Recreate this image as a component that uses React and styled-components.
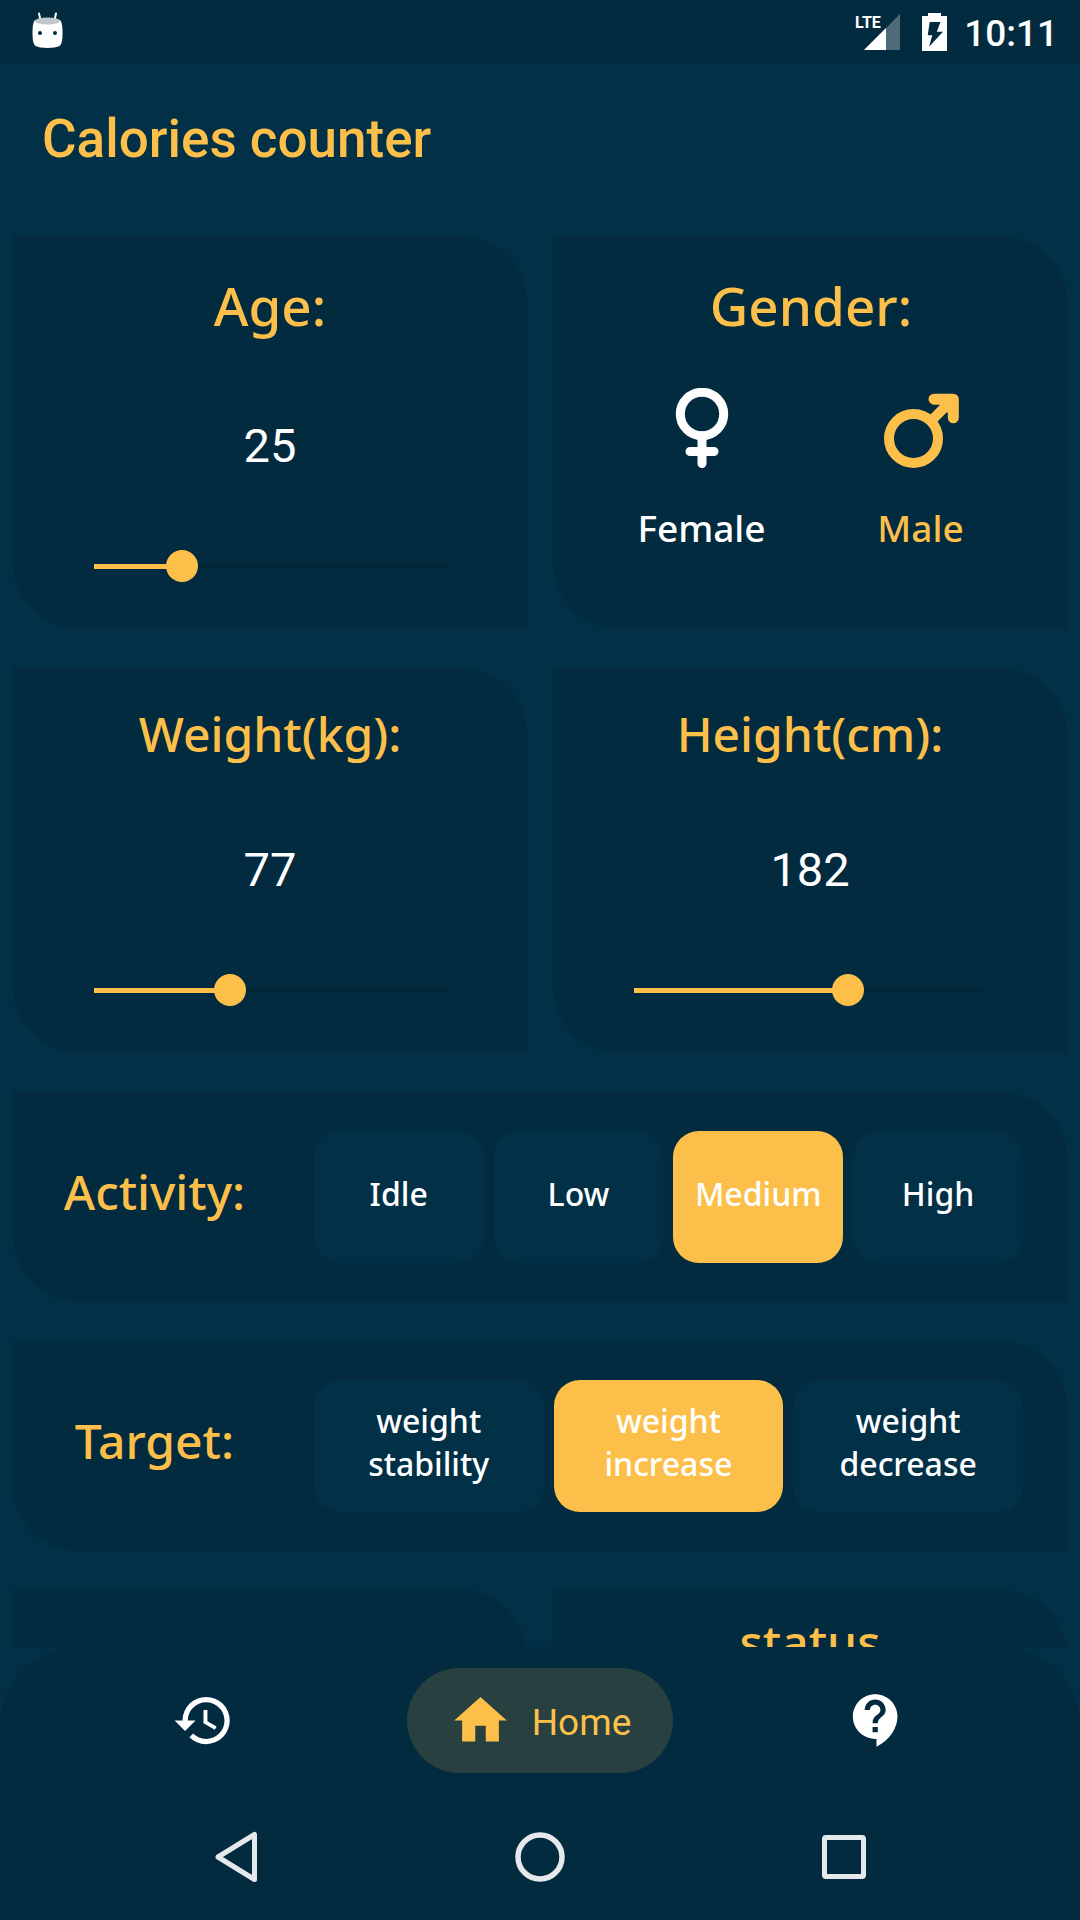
import React, { useState } from "react";
import styled, { createGlobalStyle, ThemeProvider } from "styled-components";
import { MdHistory, MdHome, MdContactSupport } from "react-icons/md";

const theme = {
  page: "#023047",
  panel: "#022b3f",
  track: "#022738",
  accent: "#fcbf49",
  pill: "#284140",
  text: "#ffffff",
  system: "#e6e9ec",
  ui: 'Roboto, "Liberation Sans", sans-serif',
  display: '"Noto Sans", "Open Sans", sans-serif',
};

const GlobalStyle = createGlobalStyle`
  *, *::before, *::after { box-sizing: border-box; }
  body {
    margin: 0;
    background: ${theme.page};
    color: ${theme.text};
    font-family: ${theme.ui};
  }
  button {
    margin: 0;
    padding: 0;
    border: 0;
    background: none;
    color: inherit;
    font: inherit;
    cursor: pointer;
  }
`;

const Screen = styled.div`
  display: flex;
  flex-direction: column;
  height: 100vh;
  overflow: hidden;
`;

const StatusBar = styled.div`
  display: flex;
  flex: none;
  align-items: center;
  justify-content: space-between;
  height: 63px;
  padding: 0 22px 0 30px;
  background: ${(p) => p.theme.panel};
`;

const StatusIcons = styled.div`
  display: flex;
  align-items: center;
  gap: 17px;
`;

const Clock = styled.time`
  padding-top: 4px;
  font-size: 37px;
  font-weight: 500;
  line-height: 43px;
`;

const Header = styled.header`
  flex: none;
  padding: 45px 42px 66px;
`;

const AppTitle = styled.h1`
  margin: 0;
  color: ${(p) => p.theme.accent};
  font-size: 53px;
  font-weight: 500;
  line-height: 62px;
`;

const Content = styled.main`
  display: flex;
  flex: 1;
  flex-direction: column;
  gap: 39px;
  min-height: 0;
  padding: 0 13px;
  overflow-y: auto;
  scrollbar-width: none;
`;

const CardRow = styled.div`
  display: grid;
  flex: none;
  grid-template-columns: 1fr 1fr;
  gap: 26px;
`;

const Card = styled.section`
  background: ${(p) => p.theme.panel};
  border-radius: 0 66px 0 66px;
`;

const SliderCard = styled(Card)`
  display: flex;
  flex-direction: column;
  align-items: center;
  gap: 76px;
  padding: 34px 65px 47px;
`;

const GenderCard = styled(Card)`
  display: flex;
  flex-direction: column;
  align-items: center;
  gap: 46px;
  padding: 34px 37px 47px 39px;
`;

const ResultCard = styled(Card)`
  display: flex;
  justify-content: center;
  min-height: 210px;
  padding: 20px 38px;
`;

const CardTitle = styled.h2`
  margin: 0;
  color: ${(p) => p.theme.accent};
  font-family: ${(p) => p.theme.display};
  font-size: ${(p) => (p.$large ? 53 : 48)}px;
  font-weight: 500;
  line-height: ${(p) => (p.$large ? 72 : 64)}px;
  text-align: center;
`;

const Value = styled.output`
  font-size: 47px;
  line-height: 56px;
`;

const Slider = styled.input`
  appearance: none;
  width: 100%;
  height: 32px;
  margin: 0;
  background: none;
  cursor: pointer;

  &::-webkit-slider-runnable-track {
    height: 5px;
    background: linear-gradient(
      to right,
      ${(p) => p.theme.accent} var(--fill),
      ${(p) => p.theme.track} var(--fill)
    ) center / calc(100% - 32px) 5px no-repeat;
  }

  &::-webkit-slider-thumb {
    appearance: none;
    width: 32px;
    height: 32px;
    margin-top: -14px;
    border-radius: 50%;
    background: ${(p) => p.theme.accent};
  }
`;

const GenderChoices = styled.div`
  display: grid;
  grid-template-columns: 1fr 1fr;
  width: 100%;
`;

const GenderButton = styled.button`
  && {
    display: flex;
    flex-direction: column;
    align-items: center;
    gap: 36px;
    color: ${(p) => (p["aria-pressed"] ? p.theme.accent : p.theme.text)};
    font-family: ${(p) => p.theme.display};
    font-size: 37px;
    font-weight: 500;
    line-height: 48px;
  }
`;

const OptionCard = styled(Card)`
  display: flex;
  flex: none;
  align-items: center;
  gap: 18px;
  padding: 39px 44px 39px 0;
`;

const OptionTitle = styled(CardTitle)`
  flex: 0 0 28%;
  padding-bottom: 10px;
`;

const Options = styled.div`
  display: flex;
  flex: 1;
  gap: 10px;
`;

const OptionButton = styled.button`
  && {
    flex: 1 1 0;
    min-width: 0;
    height: 132px;
    padding: 0 16px 8px;
    border-radius: 26px;
    background: ${(p) => (p["aria-pressed"] ? p.theme.accent : p.theme.page)};
    font-family: ${(p) => p.theme.display};
    font-size: 32px;
    font-weight: 500;
    line-height: 43px;
  }
`;

const TabBar = styled.nav`
  display: flex;
  flex: none;
  align-items: center;
  justify-content: space-evenly;
  padding: 21px 0;
  background: ${(p) => p.theme.panel};
  border-radius: 78px 78px 0 0;
`;

const Tab = styled.a`
  display: flex;
  align-items: center;
  gap: 20px;
  height: 105px;
  padding: 0 42px;
  border-radius: 53px;
  background: ${(p) => (p.$active ? p.theme.pill : "transparent")};
  color: ${(p) => (p.$active ? p.theme.accent : p.theme.text)};
  font-size: 37px;
  line-height: 43px;
  text-decoration: none;
`;

const TabLabel = styled.span`
  padding-top: 4px;
`;

const SystemBar = styled.div`
  display: flex;
  flex: none;
  height: 126px;
  padding: 0 84px;
  background: ${(p) => p.theme.panel};
`;

const SystemButton = styled.button`
  && {
    display: flex;
    flex: 1;
    align-items: center;
    justify-content: center;
    color: ${(p) => p.theme.system};
  }
`;

const RobotIcon = () => (
  <svg width="35" height="40" viewBox="0 0 35 40" aria-hidden="true">
    <path d="M9 1.500l1.500 6.500M26 1.500l-1.500 6.500" stroke="#fff" strokeWidth="2" strokeLinecap="round" />
    <path d="M5 8C3 10 2.500 15 2.500 21c0 6 .500 11 3 13C10 36.500 25 36.500 29.500 34c2.500-2 3-7 3-13 0-6-.500-11-2.500-13z" fill="#fff" />
    <ellipse cx="17.500" cy="9" rx="12.500" ry="3.500" fill="#c0c8cd" />
    <circle cx="10" cy="21" r="2" fill={theme.panel} />
    <circle cx="25" cy="21" r="2" fill={theme.panel} />
  </svg>
);

const SignalIcon = () => (
  <svg width="50" height="38" viewBox="0 0 50 38" role="img" aria-label="LTE signal">
    <path d="M45 1v36H9z" fill="#4f6b79" />
    <path d="M31 15v22H9z" fill="#fff" />
    <text x="0" y="15" fill="#fff" fontFamily="'Liberation Sans Narrow', Roboto, sans-serif" fontSize="16" fontWeight="700">
      LTE
    </text>
  </svg>
);

const BatteryIcon = () => (
  <svg width="25" height="38" viewBox="0 0 25 38" role="img" aria-label="Battery charging">
    <path d="M6 0h13v3h6v35H0V3h6z" fill="#fff" />
    <path d="M7.700 9h10.800l-3.700 9.700H21L7 33.700l3.300-11.400H5.700z" fill={theme.panel} />
  </svg>
);

const FemaleIcon = () => (
  <svg width="80" height="80" viewBox="0 0 80 80" fill="none" stroke="currentColor" strokeWidth="9" strokeLinecap="round" aria-hidden="true">
    <circle cx="40" cy="26" r="21.700" />
    <path d="M40 48v27.500M28 63.500h24" />
  </svg>
);

const MaleIcon = () => (
  <svg width="80" height="80" viewBox="0 0 80 80" fill="none" stroke="currentColor" strokeLinecap="round" strokeLinejoin="round" aria-hidden="true">
    <circle cx="32.500" cy="50.500" r="24.500" strokeWidth="10" />
    <path d="M51 32l18-18" strokeWidth="10" />
    <path d="M53 11.200h19.300v18.600" strokeWidth="11" />
    <path d="M60 14h10v10z" fill="currentColor" strokeWidth="6" />
  </svg>
);

const BackIcon = () => (
  <svg width="54" height="54" viewBox="0 0 54 54" fill="none" stroke="currentColor" strokeWidth="5" strokeLinejoin="round" aria-hidden="true">
    <path d="M45.500 4.500v45L9 27z" />
  </svg>
);

const CircleIcon = () => (
  <svg width="54" height="54" viewBox="0 0 54 54" fill="none" stroke="currentColor" strokeWidth="5.500" aria-hidden="true">
    <circle cx="27" cy="27" r="22" />
  </svg>
);

const SquareIcon = () => (
  <svg width="54" height="54" viewBox="0 0 54 54" fill="none" stroke="currentColor" strokeWidth="5" aria-hidden="true">
    <rect x="7.500" y="7.500" width="39" height="39" rx="1.500" />
  </svg>
);

function RangeCard({ id, title, large, max, initial }) {
  const [value, setValue] = useState(initial);
  return (
    <SliderCard>
      <CardTitle as="label" htmlFor={id} $large={large}>{title}</CardTitle>
      <Value htmlFor={id}>{value}</Value>
      <Slider
        id={id}
        type="range"
        min="0"
        max={max}
        value={value}
        onChange={(e) => setValue(Number(e.target.value))}
        style={{ "--fill": `${(value / max) * 100}%` }}
      />
    </SliderCard>
  );
}

function OptionGroup({ id, title, options, initial }) {
  const [selected, setSelected] = useState(initial);
  return (
    <OptionCard>
      <OptionTitle id={id}>{title}</OptionTitle>
      <Options role="group" aria-labelledby={id}>
        {options.map((option) => (
          <OptionButton
            key={option}
            type="button"
            aria-pressed={option === selected}
            onClick={() => setSelected(option)}
          >
            {option}
          </OptionButton>
        ))}
      </Options>
    </OptionCard>
  );
}

function GenderPicker() {
  const [gender, setGender] = useState("Male");
  const choices = [
    { name: "Female", Icon: FemaleIcon },
    { name: "Male", Icon: MaleIcon },
  ];
  return (
    <GenderCard>
      <CardTitle id="gender" $large>Gender:</CardTitle>
      <GenderChoices role="group" aria-labelledby="gender">
        {choices.map(({ name, Icon }) => (
          <GenderButton key={name} type="button" aria-pressed={name === gender} onClick={() => setGender(name)}>
            <Icon />
            {name}
          </GenderButton>
        ))}
      </GenderChoices>
    </GenderCard>
  );
}

export default function App() {
  return (
    <ThemeProvider theme={theme}>
      <GlobalStyle />
      <Screen>
        <StatusBar>
          <RobotIcon />
          <StatusIcons>
            <SignalIcon />
            <BatteryIcon />
            <Clock>10:11</Clock>
          </StatusIcons>
        </StatusBar>

        <Header>
          <AppTitle>Calories counter</AppTitle>
        </Header>

        <Content>
          <CardRow>
            <RangeCard id="age" title="Age:" large max={100} initial={25} />
            <GenderPicker />
          </CardRow>
          <CardRow>
            <RangeCard id="weight" title="Weight(kg):" max={200} initial={77} />
            <RangeCard id="height" title="Height(cm):" max={300} initial={182} />
          </CardRow>
          <OptionGroup id="activity" title="Activity:" options={["Idle", "Low", "Medium", "High"]} initial="Medium" />
          <OptionGroup
            id="target"
            title="Target:"
            options={["weight stability", "weight increase", "weight decrease"]}
            initial="weight increase"
          />
          <CardRow>
            <ResultCard />
            <ResultCard>
              <CardTitle>status</CardTitle>
            </ResultCard>
          </CardRow>
        </Content>

        <TabBar aria-label="Main">
          <Tab href="#history" aria-label="History">
            <MdHistory size={63} />
          </Tab>
          <Tab href="#home" $active aria-current="page">
            <MdHome size={63} />
            <TabLabel>Home</TabLabel>
          </Tab>
          <Tab href="#help" aria-label="Help">
            <MdContactSupport size={63} />
          </Tab>
        </TabBar>

        <SystemBar>
          <SystemButton type="button" aria-label="Back"><BackIcon /></SystemButton>
          <SystemButton type="button" aria-label="Home screen"><CircleIcon /></SystemButton>
          <SystemButton type="button" aria-label="Recent apps"><SquareIcon /></SystemButton>
        </SystemBar>
      </Screen>
    </ThemeProvider>
  );
}
